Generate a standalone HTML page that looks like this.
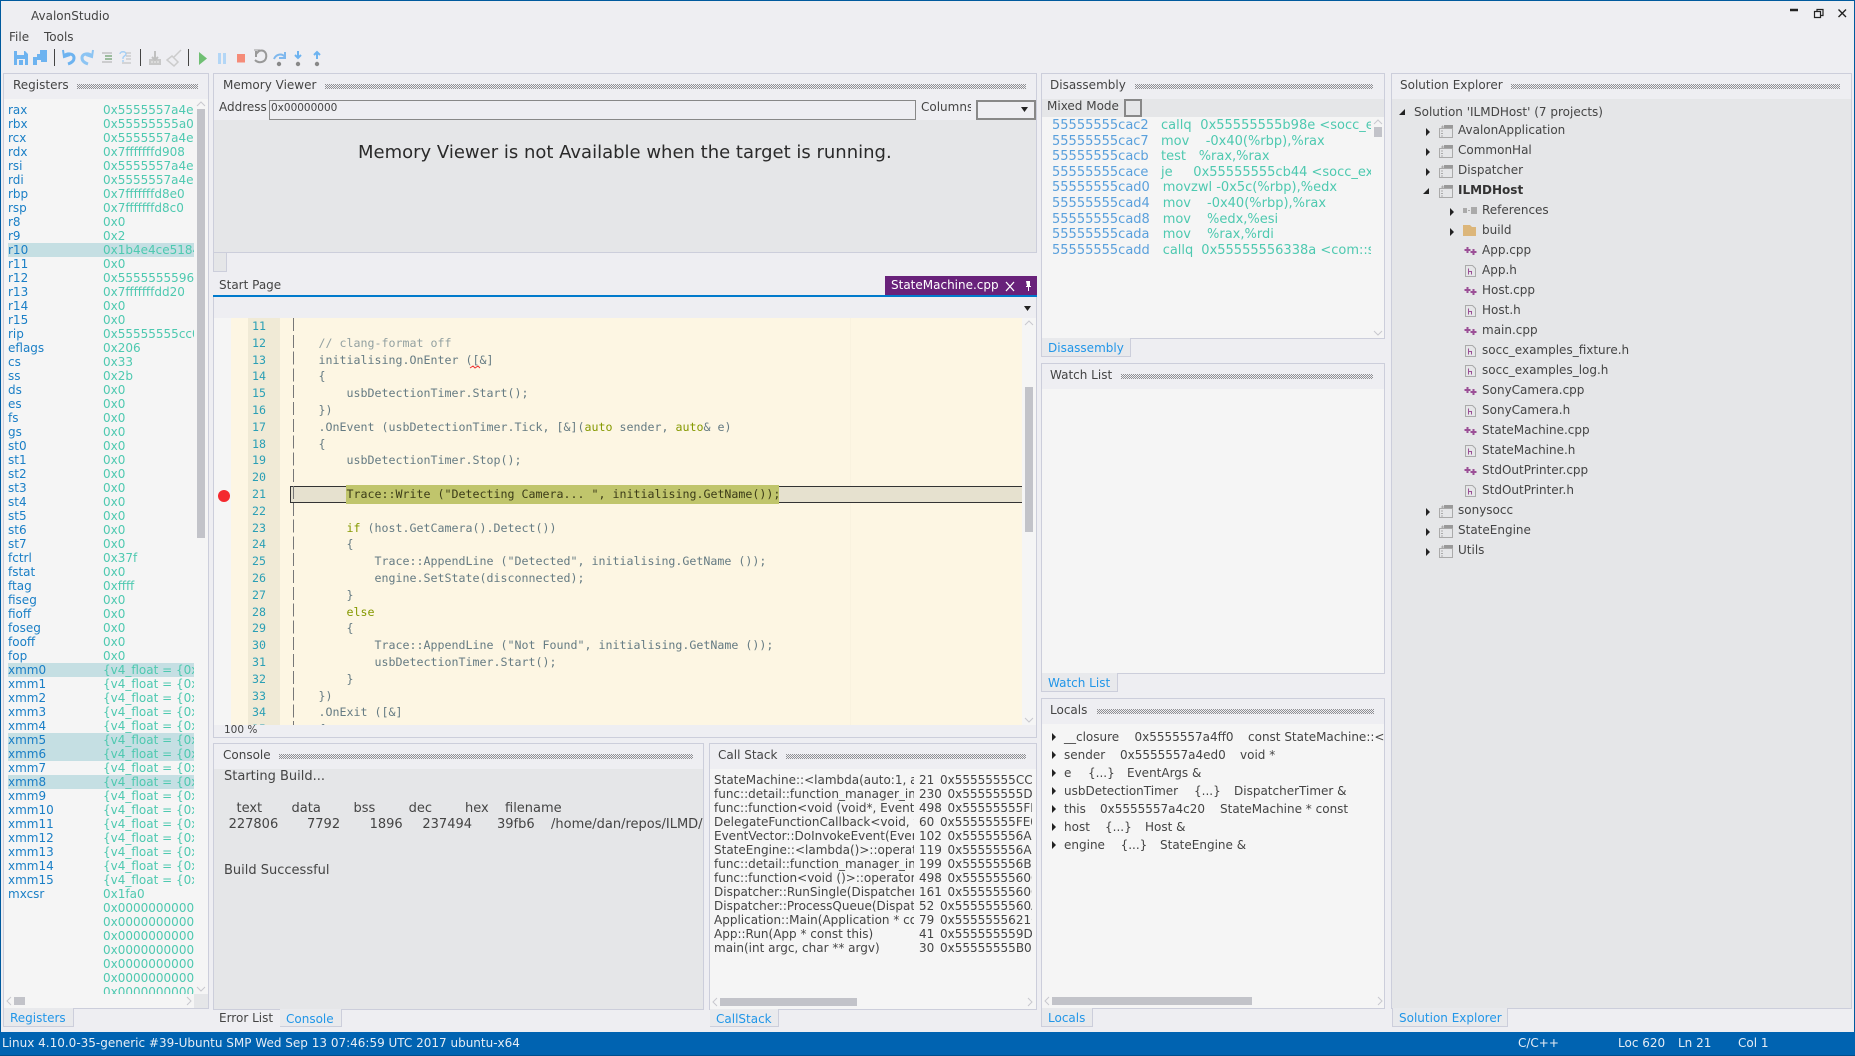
<!DOCTYPE html>
<html><head><meta charset="utf-8"><title>AvalonStudio</title>
<style>
html,body{margin:0;padding:0;width:1855px;height:1056px;overflow:hidden;background:#eeeef2}
body{position:relative;font:12px/16px "DejaVu Sans","Liberation Sans",sans-serif;color:#444}
.a,.t{position:absolute}
.t{white-space:pre;height:16px;line-height:16px}
.c{font-size:13px}
.box{position:absolute;box-sizing:border-box;border:1px solid #cccedb}
.g{position:absolute;height:5px;background:
linear-gradient(90deg,#8f8f93 1px,transparent 1px) 0 0/2px 1px repeat-x,
linear-gradient(90deg,transparent 1px,#8f8f93 1px) 0 1px/2px 1px repeat-x,
linear-gradient(90deg,#8f8f93 1px,transparent 1px) 0 2px/2px 1px repeat-x,
linear-gradient(90deg,transparent 1px,#8f8f93 1px) 0 3px/2px 1px repeat-x,
linear-gradient(90deg,#8f8f93 1px,transparent 1px) 0 4px/2px 1px repeat-x}
.tab{position:absolute;box-sizing:border-box;height:19px;background:#e8e9ec;border:1px solid #cccedb;border-top:0;color:#2196e8;line-height:21px;padding-left:6px;white-space:pre}
.thumb{position:absolute;background:#c2c3c9}
#reg{position:absolute;left:8px;top:103px;width:186px;height:891px;overflow:hidden}
#reg div{position:relative;height:14px;line-height:14px}
#reg div.h{background:#c5dfe3}
#reg b,#reg i{position:absolute;top:0;font-weight:normal;font-style:normal;white-space:pre}
#reg b{left:0;color:#1a7fc6}
#reg i{left:95px;color:#4ec9b0}
#code,#nums{position:absolute;font:11.63px/16.8px "DejaVu Sans Mono","Liberation Mono",monospace;white-space:pre}
#nums{color:#2a9fb5}
#code{color:#657b83}
#code u{text-decoration:none;color:#859900}
#code em{font-style:normal;color:#93a1a1}
#code s{text-decoration:none;color:#3c3c18}
#dis{position:absolute;left:1042px;top:117px;width:329px;height:221px;overflow:hidden;font-size:13px;color:#4ec9b0}
#dis span{position:absolute;white-space:pre;line-height:16px}
#dis .ad{left:10px;color:#5aa0dc}
#cs{position:absolute;left:714px;top:773px;width:318px;height:190px;overflow:hidden}
#cs div{position:relative;height:14px;line-height:14px}
#cs span{position:absolute;top:0;white-space:pre}
#cs .f{left:0;width:200px;overflow:hidden}
#cs .n{left:205px}
#cs .q{left:226px}
#cs .w{left:233.5px}
.st{color:#e6edf5}
svg.a{overflow:visible}
</style></head>
<body>
<svg width="0" height="0" style="position:absolute">
<defs>
<symbol id="proj" viewBox="0 0 14 14"><path d="M.5 4.500h13v9H.5z" fill="none" stroke="#aaa"/><path d="M5 1h9v3H5z" fill="#999"/><path d="M2 3h3M3.500 1.500v3M2 7h2M2 9.500h2M2 12h2" stroke="#aaa" fill="none"/></symbol>
<symbol id="cpp" viewBox="0 0 13 10"><path d="M3.500 1v6M.5 4h6M9.500 3v6M6.500 6h6" stroke="#9b4f96" stroke-width="2" fill="none"/></symbol>
<symbol id="h" viewBox="0 0 11 12"><path d="M.5.5h7l3 3v8H.5z" fill="none" stroke="#aaa"/><path d="M3.500 3.500v6M3.500 6.500h3v3" fill="none" stroke="#9b4f96"/></symbol>
<symbol id="ar" viewBox="0 0 4 8"><path d="M0 0l4 4-4 4z" fill="#222"/></symbol>
<symbol id="ad" viewBox="0 0 6 6"><path d="M6 0v6H0z" fill="#222"/></symbol>
</defs>
</svg>

<!-- window frame -->
<div class="a" style="left:0;top:0;width:1855px;height:1px;background:#005a9e"></div>
<div class="a" style="left:0;top:0;width:1px;height:1056px;background:#005a9e"></div>
<div class="a" style="left:1854px;top:0;width:1px;height:1056px;background:#005a9e"></div>

<div class="t" style="left:31px;top:8px">AvalonStudio</div>
<div class="t" style="left:9px;top:29px">File</div>
<div class="t" style="left:44px;top:29px">Tools</div>

<!-- window controls -->
<svg class="a" style="left:1785px;top:5px" width="65" height="16" fill="none" stroke="#222">
<path d="M5 5h8" stroke-width="2.500"/>
<path d="M29.500 6.500h6v6h-6zM32 6V4.500h6v6h-2" stroke-width="1.200"/>
<path d="M53.500 4.500l7.500 7.500M61 4.500l-7.500 7.500" stroke-width="1.400"/>
</svg>

<!-- toolbar -->
<svg class="a" style="left:0;top:45px" width="340" height="26" fill="none">
<path d="M14 6h11l3 3v11H14z" fill="#6db3f0"/><path d="M17 6h7v4h-7zM17 14h8v6h-8z" fill="#eeeef2"/><path d="M19 15h4v5h-4z" fill="#6db3f0"/>
<path d="M33 12h4V9h3V5h7v12h-7v3h-7z" fill="#6db3f0"/><path d="M37 15h4v5h-4z" fill="#eeeef2"/>
<path d="M54.500 4v17" stroke="#444" stroke-width="1"/>
<path d="M64 11c3-3 10-3 10 2 0 3-3 5-6 6" stroke="#6db3f0" stroke-width="3"/>
<path d="M63 5l1 7 6-2" stroke="#6db3f0" stroke-width="2"/>
<path d="M92 11c-3-3-10-3-10 2 0 3 3 5 6 6" stroke="#8cc4f3" stroke-width="3"/>
<path d="M93 5l-1 7-6-2" stroke="#8cc4f3" stroke-width="2"/>
<path d="M102 8h10M102 17h10" stroke="#aaa"/><path d="M105 11h7M105 14h7" stroke="#4a8a4a"/>
<path d="M120 9c0-3 6-3 6 0 0 2-3 2-3 4v1M123 15v2" stroke="#a5cff5" stroke-width="1.400"/><path d="M126 8h5M126 11h5M126 14h5M122 18h9" stroke="#bbb"/>
<path d="M140.500 4v17" stroke="#444" stroke-width="1"/>
<path d="M149 14h12v6h-12z" fill="#c8c8c8"/><path d="M152 12l3 3 3-3M155 6v8" stroke="#c0c0c0" stroke-width="2"/><path d="M151 17h2M154 17h2M157 17h2" stroke="#eee"/>
<path d="M181 5l-7 7" stroke="#ccc" stroke-width="1.500"/><path d="M167 15l5-4 6 6-4 4z" stroke="#ccc" stroke-width="1.500"/>
<path d="M188.500 4v17" stroke="#444" stroke-width="1"/>
<path d="M199 7l8 6.500-8 6.500z" fill="#6fbf73"/>
<path d="M218 8h3v11h-3zM223 8h3v11h-3z" fill="#b3d6f6"/>
<path d="M237 9h8v8.500h-8z" fill="#f58b78"/>
<path d="M256 6v6M256 9l3-3c6-2 8 3 7 7-1 4-7 6-11 2" stroke="#999" stroke-width="2"/><path d="M254 5h6" stroke="#999" stroke-width="1"/>
<path d="M274 14c2-5 8-6 11-2M285 7v6h-6" stroke="#7fb8ee" stroke-width="2"/><circle cx="279" cy="19" r="2.200" fill="#888"/>
<path d="M298 6v6M295 10l3 3 3-3" stroke="#6db3f0" stroke-width="2"/><circle cx="298" cy="19" r="2.200" fill="#888"/>
<path d="M317 14V8M314 10l3-3 3 3" stroke="#6db3f0" stroke-width="2"/><circle cx="317" cy="19" r="2.200" fill="#888"/>
</svg>

<!-- Registers -->
<div class="box" style="left:3px;top:73px;width:206px;height:936px;background:#f5f5f5"></div>
<div class="a" style="left:4px;top:74px;width:204px;height:25px;background:#eeeef2"></div>
<div class="t" style="left:13px;top:77px">Registers</div>
<div class="g" style="left:77px;top:84px;width:121px"></div>
<div id="reg">
<div><b>rax</b><i>0x5555557a4e00</i></div>
<div><b>rbx</b><i>0x55555555a0b0</i></div>
<div><b>rcx</b><i>0x5555557a4e10</i></div>
<div><b>rdx</b><i>0x7fffffffd908</i></div>
<div><b>rsi</b><i>0x5555557a4e20</i></div>
<div><b>rdi</b><i>0x5555557a4e40</i></div>
<div><b>rbp</b><i>0x7fffffffd8e0</i></div>
<div><b>rsp</b><i>0x7fffffffd8c0</i></div>
<div><b>r8</b><i>0x0</i></div>
<div><b>r9</b><i>0x2</i></div>
<div class="h"><b>r10</b><i>0x1b4e4ce51840</i></div>
<div><b>r11</b><i>0x0</i></div>
<div><b>r12</b><i>0x555555559600</i></div>
<div><b>r13</b><i>0x7fffffffdd20</i></div>
<div><b>r14</b><i>0x0</i></div>
<div><b>r15</b><i>0x0</i></div>
<div><b>rip</b><i>0x55555555cc00</i></div>
<div><b>eflags</b><i>0x206</i></div>
<div><b>cs</b><i>0x33</i></div>
<div><b>ss</b><i>0x2b</i></div>
<div><b>ds</b><i>0x0</i></div>
<div><b>es</b><i>0x0</i></div>
<div><b>fs</b><i>0x0</i></div>
<div><b>gs</b><i>0x0</i></div>
<div><b>st0</b><i>0x0</i></div>
<div><b>st1</b><i>0x0</i></div>
<div><b>st2</b><i>0x0</i></div>
<div><b>st3</b><i>0x0</i></div>
<div><b>st4</b><i>0x0</i></div>
<div><b>st5</b><i>0x0</i></div>
<div><b>st6</b><i>0x0</i></div>
<div><b>st7</b><i>0x0</i></div>
<div><b>fctrl</b><i>0x37f</i></div>
<div><b>fstat</b><i>0x0</i></div>
<div><b>ftag</b><i>0xffff</i></div>
<div><b>fiseg</b><i>0x0</i></div>
<div><b>fioff</b><i>0x0</i></div>
<div><b>foseg</b><i>0x0</i></div>
<div><b>fooff</b><i>0x0</i></div>
<div><b>fop</b><i>0x0</i></div>
<div class="h"><b>xmm0</b><i>{v4_float = {0x0</i></div>
<div><b>xmm1</b><i>{v4_float = {0x0</i></div>
<div><b>xmm2</b><i>{v4_float = {0x0</i></div>
<div><b>xmm3</b><i>{v4_float = {0x0</i></div>
<div><b>xmm4</b><i>{v4_float = {0x0</i></div>
<div class="h"><b>xmm5</b><i>{v4_float = {0x0</i></div>
<div class="h"><b>xmm6</b><i>{v4_float = {0x0</i></div>
<div><b>xmm7</b><i>{v4_float = {0x0</i></div>
<div class="h"><b>xmm8</b><i>{v4_float = {0x0</i></div>
<div><b>xmm9</b><i>{v4_float = {0x0</i></div>
<div><b>xmm10</b><i>{v4_float = {0x0</i></div>
<div><b>xmm11</b><i>{v4_float = {0x0</i></div>
<div><b>xmm12</b><i>{v4_float = {0x0</i></div>
<div><b>xmm13</b><i>{v4_float = {0x0</i></div>
<div><b>xmm14</b><i>{v4_float = {0x0</i></div>
<div><b>xmm15</b><i>{v4_float = {0x0</i></div>
<div><b>mxcsr</b><i>0x1fa0</i></div>
<div><i>0x000000000000</i></div>
<div><i>0x000000000000</i></div>
<div><i>0x000000000000</i></div>
<div><i>0x000000000000</i></div>
<div><i>0x000000000000</i></div>
<div><i>0x000000000000</i></div>
<div><i>0x000000000000</i></div>
</div>
<div class="thumb" style="left:197px;top:109px;width:8px;height:429px"></div>
<svg class="a" style="left:196px;top:100px" width="10" height="8" fill="none" stroke="#c8c8ce"><path d="M1 6l4-4 4 4"/></svg>
<svg class="a" style="left:196px;top:985px" width="10" height="8" fill="none" stroke="#c8c8ce"><path d="M1 2l4 4 4-4"/></svg>
<div class="a" style="left:194px;top:994px;width:14px;height:14px;background:#e5e6e8"></div>
<div class="thumb" style="left:14px;top:997px;width:11px;height:8px"></div>
<svg class="a" style="left:5px;top:996px" width="8" height="10" fill="none" stroke="#c8c8ce"><path d="M6 1L2 5l4 4"/></svg>
<svg class="a" style="left:185px;top:996px" width="8" height="10" fill="none" stroke="#c8c8ce"><path d="M2 1l4 4-4 4"/></svg>
<div class="tab" style="left:3px;top:1008px;width:71px">Registers</div>

<!-- Memory Viewer -->
<div class="box" style="left:213px;top:73px;width:824px;height:180px;background:#e5e6e8"></div>
<div class="a" style="left:214px;top:74px;width:822px;height:46px;background:#eeeef2"></div>
<div class="t" style="left:223px;top:77px">Memory Viewer</div>
<div class="g" style="left:325px;top:84px;width:701px"></div>
<div class="a" style="left:219px;top:98px;width:49px;height:18px;overflow:hidden;line-height:18px;white-space:pre">Address</div>
<div class="a" style="box-sizing:border-box;left:269px;top:100px;width:647px;height:20px;border:1px solid #888;background:#eeeef2;font-size:10.500px;line-height:10px;padding:2px 0 0 1px">0x00000000</div>
<div class="a" style="left:921px;top:98px;width:50px;height:18px;overflow:hidden;line-height:18px;white-space:pre">Columns</div>
<div class="a" style="box-sizing:border-box;left:976px;top:100px;width:60px;height:20px;border:2px solid #888"></div>
<svg class="a" style="left:1021px;top:107px" width="7" height="5"><path d="M0 0h7L3.500 5z" fill="#222"/></svg>
<div class="t" style="left:358px;top:141px;font-size:18px;line-height:24px;height:24px;color:#2a2a2a">Memory Viewer is not Available when the target is running.</div>
<div class="box" style="left:213px;top:252px;width:14px;height:20px;background:#e5e6e8"></div>

<!-- Editor -->
<div class="t" style="left:219px;top:277px">Start Page</div>
<div class="a" style="left:885px;top:276px;width:152px;height:19px;background:#68217a"></div>
<div class="t" style="left:891px;top:277px;color:#fff">StateMachine.cpp</div>
<svg class="a" style="left:1004px;top:279px" width="30" height="14" fill="none" stroke="#fff"><path d="M2 3l8 9M10 3l-8 9" stroke-width="1.300"/><path d="M22 2h4v5h1v1h-2v4h-1V8h-2V7h1z" fill="#fff" stroke="none"/></svg>
<div class="a" style="left:213px;top:295px;width:824px;height:2px;background:#007acc"></div>
<svg class="a" style="left:1024px;top:306px" width="7" height="5"><path d="M0 0h7L3.500 5z" fill="#222"/></svg>
<div class="a" style="left:214px;top:318px;width:822px;height:407px;background:#f5f5f5;overflow:hidden"></div>
<div class="a" style="left:231px;top:318px;width:17px;height:407px;background:#fdf6e3"></div>
<div class="a" style="left:248px;top:318px;width:32px;height:407px;background:#f0ead6"></div>
<div class="a" style="left:280px;top:318px;width:742px;height:407px;background:#fdf6e3"></div>
<div class="a" style="left:850px;top:318px;width:1px;height:407px;background:#f9f2df"></div>
<div class="a" style="left:290px;top:486px;width:732px;height:17px;box-sizing:border-box;background:#e6e1cf;border:1px solid #333;border-right:0"></div>
<div class="a" style="left:346px;top:485px;width:433px;height:19px;background:#c0c56c"></div>
<div class="a" style="left:293px;top:318px;width:1px;height:407px;background:repeating-linear-gradient(#777 0 13px,transparent 13px 16.800px)"></div>
<div class="a" style="left:214px;top:318px;width:808px;height:407px;overflow:hidden">
<div id="nums" style="left:38px;top:0">11
12
13
14
15
16
17
18
19
20
21
22
23
24
25
26
27
28
29
30
31
32
33
34
35</div>
<div id="code" style="left:76.500px;top:0">
    <em>// clang-format off</em>
    initialising.OnEnter ([&amp;]
    {
        usbDetectionTimer.Start();
    })
    .OnEvent (usbDetectionTimer.Tick, [&amp;](<u>auto</u> sender, <u>auto</u>&amp; e)
    {
        usbDetectionTimer.Stop();

        <s>Trace::Write ("Detecting Camera... ", initialising.GetName());</s>

        <u>if</u> (host.GetCamera().Detect())
        {
            Trace::AppendLine ("Detected", initialising.GetName ());
            engine.SetState(disconnected);
        }
        <u>else</u>
        {
            Trace::AppendLine ("Not Found", initialising.GetName ());
            usbDetectionTimer.Start();
        }
    })
    .OnExit ([&amp;]
    {</div>
</div>
<svg class="a" style="left:470px;top:365px" width="11" height="4" fill="none" stroke="#e33"><path d="M0 3l3-2 2 2 3-2 2 2"/></svg>
<div class="a" style="left:218px;top:490px;width:12px;height:12px;border-radius:50%;background:#f4292f"></div>
<div class="thumb" style="left:1025px;top:387px;width:8px;height:145px"></div>
<svg class="a" style="left:1024px;top:319px" width="10" height="8" fill="none" stroke="#c8c8ce"><path d="M1 6l4-4 4 4"/></svg>
<svg class="a" style="left:1024px;top:716px" width="10" height="8" fill="none" stroke="#c8c8ce"><path d="M1 2l4 4 4-4"/></svg>
<div class="t" style="left:224px;top:722px;font-size:10.500px">100 %</div>
<div class="a" style="left:213px;top:737px;width:824px;height:1px;background:#cccedb"></div>
<div class="a" style="left:213px;top:297px;width:1px;height:441px;background:#cccedb"></div>
<div class="a" style="left:1036px;top:297px;width:1px;height:441px;background:#cccedb"></div>

<!-- Console -->
<div class="box" style="left:213px;top:743px;width:491px;height:267px;background:#e5e6e8"></div>
<div class="a" style="left:214px;top:744px;width:489px;height:25px;background:#eeeef2"></div>
<div class="t" style="left:223px;top:747px">Console</div>
<div class="g" style="left:279px;top:754px;width:414px"></div>
<div class="t c" style="left:224px;top:769px">Starting Build...</div>
<div class="t c" style="left:236.500px;top:801px">text</div>
<div class="t c" style="left:291.500px;top:801px">data</div>
<div class="t c" style="left:353.500px;top:801px">bss</div>
<div class="t c" style="left:408.600px;top:801px">dec</div>
<div class="t c" style="left:465px;top:801px">hex</div>
<div class="t c" style="left:505px;top:801px">filename</div>
<div class="t c" style="left:228.600px;top:817px">227806</div>
<div class="t c" style="left:307px;top:817px">7792</div>
<div class="t c" style="left:369.600px;top:817px">1896</div>
<div class="t c" style="left:422.400px;top:817px">237494</div>
<div class="t c" style="left:497px;top:817px">39fb6</div>
<div class="t c" style="left:551px;top:817px;width:152px;overflow:hidden">/home/dan/repos/ILMD/</div>
<div class="t c" style="left:224px;top:863px">Build Successful</div>
<div class="t" style="left:219px;top:1010px">Error List</div>
<div class="tab" style="left:280px;top:1009px;width:62px;height:18px;border-left:0;background:#e9eaed">Console</div>

<!-- Call Stack -->
<div class="box" style="left:709px;top:743px;width:328px;height:267px;background:#f5f5f5"></div>
<div class="a" style="left:710px;top:744px;width:326px;height:25px;background:#eeeef2"></div>
<div class="t" style="left:718px;top:747px">Call Stack</div>
<div class="g" style="left:786px;top:754px;width:240px"></div>
<div id="cs">
<div><span class="f">StateMachine::&lt;lambda(auto:1, auto&amp;)</span><span class="n">21</span><span class="q">0x55555555CC00</span></div>
<div><span class="f">func::detail::function_manager_impl</span><span class="n">230</span><span class="w">0x55555555D100</span></div>
<div><span class="f">func::function&lt;void (void*, EventArgs&amp;)</span><span class="n">498</span><span class="w">0x55555555FE00</span></div>
<div><span class="f">DelegateFunctionCallback&lt;void, void*</span><span class="n">60</span><span class="q">0x55555555FE00</span></div>
<div><span class="f">EventVector::DoInvokeEvent(EventArgs</span><span class="n">102</span><span class="w">0x55555556A000</span></div>
<div><span class="f">StateEngine::&lt;lambda()&gt;::operator()</span><span class="n">119</span><span class="w">0x55555556A000</span></div>
<div><span class="f">func::detail::function_manager_impl</span><span class="n">199</span><span class="w">0x55555556B000</span></div>
<div><span class="f">func::function&lt;void ()&gt;::operator()</span><span class="n">498</span><span class="w">0x555555560000</span></div>
<div><span class="f">Dispatcher::RunSingle(Dispatcher *</span><span class="n">161</span><span class="w">0x5555555600D0</span></div>
<div><span class="f">Dispatcher::ProcessQueue(Dispatcher</span><span class="n">52</span><span class="q">0x5555555560A00</span></div>
<div><span class="f">Application::Main(Application * const</span><span class="n">79</span><span class="q">0x55555556210</span></div>
<div><span class="f">App::Run(App * const this)</span><span class="n">41</span><span class="q">0x555555559D00</span></div>
<div><span class="f">main(int argc, char ** argv)</span><span class="n">30</span><span class="q">0x55555555B000</span></div>
</div>
<div class="thumb" style="left:720px;top:998px;width:137px;height:8px"></div>
<svg class="a" style="left:711px;top:997px" width="8" height="10" fill="none" stroke="#c8c8ce"><path d="M6 1L2 5l4 4"/></svg>
<svg class="a" style="left:1026px;top:997px" width="8" height="10" fill="none" stroke="#c8c8ce"><path d="M2 1l4 4-4 4"/></svg>
<div class="tab" style="left:710px;top:1009px;width:69px;height:18px;border-left:0;background:#e9eaed">CallStack</div>

<!-- Disassembly -->
<div class="box" style="left:1041px;top:73px;width:344px;height:266px;background:#f5f5f5"></div>
<div class="a" style="left:1042px;top:74px;width:342px;height:25px;background:#eeeef2"></div>
<div class="a" style="left:1042px;top:99px;width:342px;height:18px;background:#e5e6e8"></div>
<div class="t" style="left:1050px;top:77px">Disassembly</div>
<div class="g" style="left:1135px;top:84px;width:238px"></div>
<div class="t" style="left:1047px;top:98px">Mixed Mode</div>
<div class="a" style="box-sizing:border-box;left:1124px;top:99px;width:18px;height:18px;border:2px solid #888"></div>
<div id="dis">
<span class="ad" style="top:1px">55555555cac2</span><span style="left:119px;top:1px">callq</span><span style="left:158.300px;top:1px">0x55555555b98e &lt;socc_examples</span>
<span class="ad" style="top:17px">55555555cac7</span><span style="left:119px;top:17px">mov</span><span style="left:163.700px;top:17px">-0x40(%rbp),%rax</span>
<span class="ad" style="top:32px">55555555cacb</span><span style="left:119px;top:32px">test</span><span style="left:156.700px;top:32px">%rax,%rax</span>
<span class="ad" style="top:48px">55555555cace</span><span style="left:119px;top:48px">je</span><span style="left:151.300px;top:48px">0x55555555cb44 &lt;socc_examples</span>
<span class="ad" style="top:63px">55555555cad0</span><span style="left:120.700px;top:63px">movzwl -0x5c(%rbp),%edx</span>
<span class="ad" style="top:79px">55555555cad4</span><span style="left:120.700px;top:79px">mov</span><span style="left:165px;top:79px">-0x40(%rbp),%rax</span>
<span class="ad" style="top:95px">55555555cad8</span><span style="left:120.700px;top:95px">mov</span><span style="left:165px;top:95px">%edx,%esi</span>
<span class="ad" style="top:110px">55555555cada</span><span style="left:120.700px;top:110px">mov</span><span style="left:165px;top:110px">%rax,%rdi</span>
<span class="ad" style="top:126px">55555555cadd</span><span style="left:120.700px;top:126px">callq</span><span style="left:159.300px;top:126px">0x55555556338a &lt;com::sony</span>
</div>
<div class="thumb" style="left:1374px;top:127px;width:8px;height:10px"></div>
<svg class="a" style="left:1373px;top:118px" width="10" height="8" fill="none" stroke="#c8c8ce"><path d="M1 6l4-4 4 4"/></svg>
<svg class="a" style="left:1373px;top:329px" width="10" height="8" fill="none" stroke="#c8c8ce"><path d="M1 2l4 4 4-4"/></svg>
<div class="tab" style="left:1041px;top:338px;width:90px">Disassembly</div>

<!-- Watch List -->
<div class="box" style="left:1041px;top:363px;width:344px;height:311px;background:#f5f5f5"></div>
<div class="a" style="left:1042px;top:364px;width:342px;height:25px;background:#eeeef2"></div>
<div class="t" style="left:1050px;top:367px">Watch List</div>
<div class="g" style="left:1121px;top:374px;width:252px"></div>
<div class="tab" style="left:1041px;top:673px;width:77px">Watch List</div>

<!-- Locals -->
<div class="box" style="left:1041px;top:698px;width:344px;height:311px;background:#f5f5f5"></div>
<div class="a" style="left:1042px;top:699px;width:342px;height:25px;background:#eeeef2"></div>
<div class="t" style="left:1050px;top:702px">Locals</div>
<div class="g" style="left:1097px;top:709px;width:277px"></div>
<svg class="a" style="left:1052px;top:733px" width="4" height="8"><use href="#ar"/></svg>
<div class="t" style="left:1064px;top:729px">__closure</div><div class="t" style="left:1134.500px;top:729px">0x5555557a4ff0</div><div class="t" style="left:1248px;top:729px;width:136px;overflow:hidden">const StateMachine::&lt;lambda</div>
<svg class="a" style="left:1052px;top:751px" width="4" height="8"><use href="#ar"/></svg>
<div class="t" style="left:1064px;top:747px">sender</div><div class="t" style="left:1120px;top:747px">0x5555557a4ed0</div><div class="t" style="left:1240px;top:747px">void *</div>
<svg class="a" style="left:1052px;top:769px" width="4" height="8"><use href="#ar"/></svg>
<div class="t" style="left:1064px;top:765px">e</div><div class="t" style="left:1088px;top:765px">{...}</div><div class="t" style="left:1127px;top:765px">EventArgs &amp;</div>
<svg class="a" style="left:1052px;top:787px" width="4" height="8"><use href="#ar"/></svg>
<div class="t" style="left:1064px;top:783px">usbDetectionTimer</div><div class="t" style="left:1194px;top:783px">{...}</div><div class="t" style="left:1234px;top:783px">DispatcherTimer &amp;</div>
<svg class="a" style="left:1052px;top:805px" width="4" height="8"><use href="#ar"/></svg>
<div class="t" style="left:1064px;top:801px">this</div><div class="t" style="left:1100px;top:801px">0x5555557a4c20</div><div class="t" style="left:1220px;top:801px">StateMachine * const</div>
<svg class="a" style="left:1052px;top:823px" width="4" height="8"><use href="#ar"/></svg>
<div class="t" style="left:1064px;top:819px">host</div><div class="t" style="left:1105px;top:819px">{...}</div><div class="t" style="left:1145px;top:819px">Host &amp;</div>
<svg class="a" style="left:1052px;top:841px" width="4" height="8"><use href="#ar"/></svg>
<div class="t" style="left:1064px;top:837px">engine</div><div class="t" style="left:1120.600px;top:837px">{...}</div><div class="t" style="left:1160px;top:837px">StateEngine &amp;</div>
<div class="thumb" style="left:1052px;top:997px;width:200px;height:8px"></div>
<svg class="a" style="left:1043px;top:996px" width="8" height="10" fill="none" stroke="#c8c8ce"><path d="M6 1L2 5l4 4"/></svg>
<svg class="a" style="left:1376px;top:996px" width="8" height="10" fill="none" stroke="#c8c8ce"><path d="M2 1l4 4-4 4"/></svg>
<div class="tab" style="left:1041px;top:1008px;width:52px">Locals</div>

<!-- Solution Explorer -->
<div class="box" style="left:1391px;top:73px;width:461px;height:936px;background:#e5e6e8"></div>
<div class="a" style="left:1392px;top:74px;width:459px;height:25px;background:#eeeef2"></div>
<div class="t" style="left:1400px;top:77px">Solution Explorer</div>
<div class="g" style="left:1511px;top:84px;width:329px"></div>
<svg class="a" style="left:1399px;top:109px" width="6" height="6"><use href="#ad"/></svg>
<div class="t" style="left:1414px;top:104px">Solution 'ILMDHost' (7 projects)</div>

<svg class="a" style="left:1426px;top:128px" width="4" height="8"><use href="#ar"/></svg><svg class="a" style="left:1439px;top:124px" width="14" height="14"><use href="#proj"/></svg><div class="t" style="left:1458px;top:122px">AvalonApplication</div>
<svg class="a" style="left:1426px;top:148px" width="4" height="8"><use href="#ar"/></svg><svg class="a" style="left:1439px;top:144px" width="14" height="14"><use href="#proj"/></svg><div class="t" style="left:1458px;top:142px">CommonHal</div>
<svg class="a" style="left:1426px;top:168px" width="4" height="8"><use href="#ar"/></svg><svg class="a" style="left:1439px;top:164px" width="14" height="14"><use href="#proj"/></svg><div class="t" style="left:1458px;top:162px">Dispatcher</div>
<svg class="a" style="left:1423px;top:188px" width="6" height="6"><use href="#ad"/></svg><svg class="a" style="left:1439px;top:184px" width="14" height="14"><use href="#proj"/></svg><div class="t" style="left:1458px;top:182px;font-weight:bold;color:#333">ILMDHost</div>

<svg class="a" style="left:1450px;top:208px" width="4" height="8"><use href="#ar"/></svg>
<svg class="a" style="left:1463px;top:206px" width="14" height="9"><path d="M0 2h4v5H0zM5 4h2v1H5zM8 1h6v7H8z" fill="#aaa"/></svg>
<div class="t" style="left:1482px;top:202px">References</div>
<svg class="a" style="left:1450px;top:228px" width="4" height="8"><use href="#ar"/></svg>
<svg class="a" style="left:1463px;top:225px" width="13" height="11"><path d="M0 0h7l2 2h4v9H0z" fill="#dcb67a"/></svg>
<div class="t" style="left:1482px;top:222px">build</div>

<svg class="a" style="left:1464px;top:246px" width="13" height="10"><use href="#cpp"/></svg><div class="t" style="left:1482px;top:242px">App.cpp</div>
<svg class="a" style="left:1465px;top:265px" width="11" height="12"><use href="#h"/></svg><div class="t" style="left:1482px;top:262px">App.h</div>
<svg class="a" style="left:1464px;top:286px" width="13" height="10"><use href="#cpp"/></svg><div class="t" style="left:1482px;top:282px">Host.cpp</div>
<svg class="a" style="left:1465px;top:305px" width="11" height="12"><use href="#h"/></svg><div class="t" style="left:1482px;top:302px">Host.h</div>
<svg class="a" style="left:1464px;top:326px" width="13" height="10"><use href="#cpp"/></svg><div class="t" style="left:1482px;top:322px">main.cpp</div>
<svg class="a" style="left:1465px;top:345px" width="11" height="12"><use href="#h"/></svg><div class="t" style="left:1482px;top:342px">socc_examples_fixture.h</div>
<svg class="a" style="left:1465px;top:365px" width="11" height="12"><use href="#h"/></svg><div class="t" style="left:1482px;top:362px">socc_examples_log.h</div>
<svg class="a" style="left:1464px;top:386px" width="13" height="10"><use href="#cpp"/></svg><div class="t" style="left:1482px;top:382px">SonyCamera.cpp</div>
<svg class="a" style="left:1465px;top:405px" width="11" height="12"><use href="#h"/></svg><div class="t" style="left:1482px;top:402px">SonyCamera.h</div>
<svg class="a" style="left:1464px;top:426px" width="13" height="10"><use href="#cpp"/></svg><div class="t" style="left:1482px;top:422px">StateMachine.cpp</div>
<svg class="a" style="left:1465px;top:445px" width="11" height="12"><use href="#h"/></svg><div class="t" style="left:1482px;top:442px">StateMachine.h</div>
<svg class="a" style="left:1464px;top:466px" width="13" height="10"><use href="#cpp"/></svg><div class="t" style="left:1482px;top:462px">StdOutPrinter.cpp</div>
<svg class="a" style="left:1465px;top:485px" width="11" height="12"><use href="#h"/></svg><div class="t" style="left:1482px;top:482px">StdOutPrinter.h</div>

<svg class="a" style="left:1426px;top:508px" width="4" height="8"><use href="#ar"/></svg><svg class="a" style="left:1439px;top:504px" width="14" height="14"><use href="#proj"/></svg><div class="t" style="left:1458px;top:502px">sonysocc</div>
<svg class="a" style="left:1426px;top:528px" width="4" height="8"><use href="#ar"/></svg><svg class="a" style="left:1439px;top:524px" width="14" height="14"><use href="#proj"/></svg><div class="t" style="left:1458px;top:522px">StateEngine</div>
<svg class="a" style="left:1426px;top:548px" width="4" height="8"><use href="#ar"/></svg><svg class="a" style="left:1439px;top:544px" width="14" height="14"><use href="#proj"/></svg><div class="t" style="left:1458px;top:542px">Utils</div>
<div class="tab" style="left:1392px;top:1008px;width:116px">Solution Explorer</div>

<!-- Status bar -->
<div class="a" style="left:0;top:1032px;width:1855px;height:24px;background:#0063b1"></div>
<div class="a" style="left:0;top:1055px;width:1855px;height:1px;background:#004f8e"></div>
<div class="t st" style="left:2px;top:1035px">Linux 4.10.0-35-generic #39-Ubuntu SMP Wed Sep 13 07:46:59 UTC 2017 ubuntu-x64</div>
<div class="t st" style="left:1518px;top:1035px">C/C++</div>
<div class="t st" style="left:1618px;top:1035px">Loc 620</div>
<div class="t st" style="left:1678px;top:1035px">Ln 21</div>
<div class="t st" style="left:1738px;top:1035px">Col 1</div>
</body></html>
